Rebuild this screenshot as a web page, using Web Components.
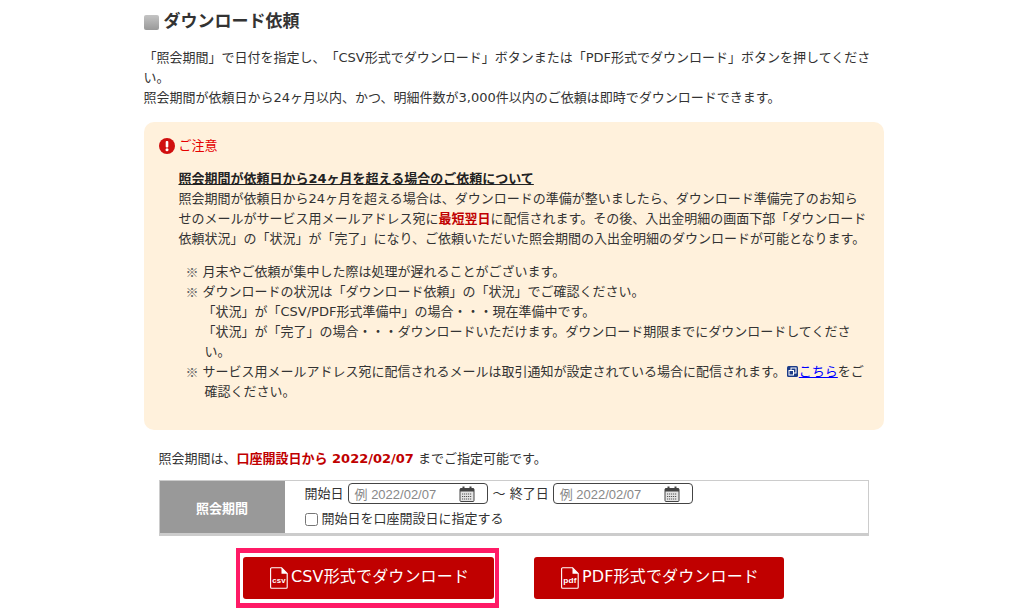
<!DOCTYPE html>
<html lang="ja">
<head>
<meta charset="utf-8">
<title>ダウンロード依頼</title>
<style>
  html, body { margin: 0; padding: 0; background: #fff; }
  body {
    font-family: "DejaVu Sans", "Noto Sans CJK JP", sans-serif;
    font-size: 13px;
    color: #333;
    overflow: hidden;
    text-spacing-trim: space-all;
  }
</style>
</head>
<body>
<dl-page>
  <dl-heading>ダウンロード依頼</dl-heading>
  <p slot="lead">「照会期間」で日付を指定し、「CSV形式でダウンロード」ボタンまたは「PDF形式でダウンロード」ボタンを押してください。<br>照会期間が依頼日から24ヶ月以内、かつ、明細件数が3,000件以内のご依頼は即時でダウンロードできます。</p>
  <dl-notice slot="notice"></dl-notice>
  <dl-period-form slot="form"></dl-period-form>
  <dl-button slot="actions" kind="csv" focused>CSV形式でダウンロード</dl-button>
  <dl-button slot="actions" kind="pdf">PDF形式でダウンロード</dl-button>
</dl-page>

<script>
class DlPage extends HTMLElement {
  constructor() {
    super();
    this.attachShadow({ mode: 'open' });
    this.shadowRoot.innerHTML = `
      <style>
        :host { display: block; width: 740px; margin: 0 auto; padding: 11px 0 14px; }
        ::slotted(p) { margin: 15px 0 0; line-height: 20px; height: 60px; }
        .notice { margin-top: 14px; }
        .form { margin-top: 19px; padding: 0 15px; }
        .actions { display: flex; justify-content: center; gap: 40px; margin-top: 21px; }
      </style>
      <slot></slot>
      <slot name="lead"></slot>
      <div class="notice"><slot name="notice"></slot></div>
      <div class="form"><slot name="form"></slot></div>
      <div class="actions"><slot name="actions"></slot></div>
    `;
  }
}

class DlHeading extends HTMLElement {
  constructor() {
    super();
    this.attachShadow({ mode: 'open' });
    this.shadowRoot.innerHTML = `
      <style>
        :host { display: flex; align-items: center; gap: 5px; height: 22px; font-size: 17px; font-weight: bold; color: #333; }
        .mark { width: 15px; height: 15px; border-radius: 2px; background: linear-gradient(#c4c4c4, #999); }
        .label { line-height: 22px; margin-top: -2px; }
      </style>
      <span class="mark"></span><span class="label"><slot></slot></span>
    `;
  }
}

class DlNotice extends HTMLElement {
  constructor() {
    super();
    this.attachShadow({ mode: 'open' });
    this.shadowRoot.innerHTML = `
      <style>
        :host { display: block; height: 308px; box-sizing: border-box; padding: 14px 16px 0 16px; background: #fff1dc; border-radius: 10px; line-height: 20px; color: #333; }
        .title { display: flex; align-items: center; gap: 4px; margin-left: -1px; color: #e60000; }
        .title svg { width: 16px; height: 16px; flex: none; }
        .body { margin: 13px 0 0 19px; }
        h3 { margin: 0; font-size: 13px; font-weight: bold; text-decoration: underline; color: #222; line-height: 20px; }
        p { margin: 0; }
        strong { color: #c00000; }
        ul { list-style: none; margin: 13px 0 0; padding: 0; }
        li { position: relative; padding-left: 26px; text-indent: -2px; }
        li::before { content: "※"; position: absolute; left: 9px; font-family: "Noto Sans CJK JP", sans-serif; color: #666; }
        .sub { display: block; }
        a { color: #00f; }
        .ext { display: inline-block; vertical-align: -1px; margin-left: 1px; margin-right: 1px; }
      </style>
      <div class="title">
        <svg viewBox="0 0 16 16"><circle cx="8" cy="8" r="8" fill="#d00f0f"/><rect x="6.7" y="3" width="2.6" height="6.6" rx="1" fill="#fff"/><circle cx="8" cy="11.8" r="1.5" fill="#fff"/></svg>
        <span>ご注意</span>
      </div>
      <div class="body">
        <h3>照会期間が依頼日から24ヶ月を超える場合のご依頼について</h3>
        <p>照会期間が依頼日から24ヶ月を超える場合は、ダウンロードの準備が整いましたら、ダウンロード準備完了のお知らせのメールがサービス用メールアドレス宛に<strong>最短翌日</strong>に配信されます。その後、入出金明細の画面下部「ダウンロード依頼状況」の「状況」が「完了」になり、ご依頼いただいた照会期間の入出金明細のダウンロードが可能となります。</p>
        <ul>
          <li>月末やご依頼が集中した際は処理が遅れることがございます。</li>
          <li>ダウンロードの状況は「ダウンロード依頼」の「状況」でご確認ください。
            <span class="sub">「状況」が「CSV/PDF形式準備中」の場合・・・現在準備中です。</span>
            <span class="sub">「状況」が「完了」の場合・・・ダウンロードいただけます。ダウンロード期限までにダウンロードしてください。</span></li>
          <li>サービス用メールアドレス宛に配信されるメールは取引通知が設定されている場合に配信されます。<svg class="ext" width="11" height="11" viewBox="0 0 11 11"><rect width="11" height="11" rx="1.5" fill="#1c3b87"/><rect x="4" y="2" width="5" height="5" fill="none" stroke="#fff" stroke-width="1"/><rect x="2" y="4.5" width="4.5" height="4.5" fill="#1c3b87" stroke="#fff" stroke-width="1"/></svg><a href="#">こちら</a>をご確認ください。</li>
        </ul>
      </div>
    `;
  }
}

class DlDateField extends HTMLElement {
  constructor() {
    super();
    this.attachShadow({ mode: 'open' });
    this.shadowRoot.innerHTML = `
      <style>
        :host { display: inline-flex; align-items: center; justify-content: space-between; box-sizing: border-box; width: 140px; height: 21px; padding: 0 12px 0 6px; border: 1px solid #444; border-radius: 4px; background: #fff; color: #888; font-family: "Liberation Sans", "Noto Sans CJK JP", sans-serif; font-size: 13px; }
        svg { width: 16px; height: 16px; }
      </style>
      <span>例 2022/02/07</span>
      <svg viewBox="0 0 16 16">
        <rect x="1" y="2.5" width="14" height="13" rx="1" fill="#e4e4e4" stroke="#444"/>
        <rect x="1" y="2.5" width="14" height="3" fill="#444"/>
        <rect x="3.5" y="0.5" width="2" height="3.5" fill="#444"/><rect x="10.5" y="0.5" width="2" height="3.5" fill="#444"/>
        <path d="M3 8h10M3 10.5h10M3 13h10" stroke="#555" stroke-dasharray="1.2 0.8"/>
      </svg>
    `;
  }
}

class DlPeriodForm extends HTMLElement {
  constructor() {
    super();
    this.attachShadow({ mode: 'open' });
    this.shadowRoot.innerHTML = `
      <style>
        :host { display: block; }
        .note { margin: 0 0 11px; line-height: 20px; height: 20px; }
        .note b { color: #c00000; }
        .table { display: grid; grid-template-columns: 125px 1fr; height: 56px; box-sizing: border-box; border: 1px solid #ccc; border-bottom-width: 3px; }
        .head { display: flex; align-items: center; justify-content: center; background: #999; color: #fff; font-weight: bold; }
        .cell { display: flex; flex-direction: column; gap: 5px; padding: 2px 0 0 20px; }
        .row { display: flex; align-items: center; height: 21px; gap: 4px; }
        .row span { line-height: 20px; }
        .row .to { margin-left: 1px; }
        .check { display: flex; align-items: center; gap: 4px; line-height: 20px; }
        input { width: 13px; height: 13px; margin: 0; }
      </style>
      <p class="note">照会期間は、<b>口座開設日から 2022/02/07</b> までご指定可能です。</p>
      <div class="table">
        <div class="head">照会期間</div>
        <div class="cell">
          <div class="row"><span>開始日</span><dl-date-field></dl-date-field><span class="to">～ 終了日</span><dl-date-field></dl-date-field></div>
          <label class="check"><input type="checkbox">開始日を口座開設日に指定する</label>
        </div>
      </div>
    `;
  }
}

class DlButton extends HTMLElement {
  constructor() {
    super();
    this.attachShadow({ mode: 'open' });
    const label = this.getAttribute('kind') === 'pdf' ? 'pdf' : 'csv';
    this.shadowRoot.innerHTML = `
      <style>
        :host { display: block; position: relative; width: 251px; }
        :host([kind="pdf"]) { width: 250px; }
        /* focus ring is square and not even on all sides */
        :host([focused])::after { content: ""; position: absolute; inset: -9px -5px -9px -7px; border: 5px solid #ff1a66; border-width: 5px 4px; pointer-events: none; }
        button { display: flex; align-items: center; justify-content: center; gap: 3px; width: 100%; height: 42px; padding: 0 0 6px 2px; border: 0; border-radius: 3px; background: #c00000; color: #fff; font: inherit; font-size: 16px; letter-spacing: .15px; }
        svg { width: 18px; height: 22px; margin-top: 5px; flex: none; }
        text { font-family: "Liberation Sans", sans-serif; font-size: 7px; font-weight: bold; fill: #fff; }
      </style>
      <button>
        <svg viewBox="0 0 18 22">
          <path d="M1.6 0.8h10l5.6 5.6v13.8a1 1 0 0 1-1 1H1.6a1 1 0 0 1-1-1V1.8a1 1 0 0 1 1-1z" fill="none" stroke="#fff" stroke-width="1.1"/>
          <path d="M11.5 0.8l6 6h-6z" fill="#fff"/>
          <text x="2.2" y="15.5" textLength="13.5" lengthAdjust="spacingAndGlyphs">${label}</text>
        </svg>
        <slot></slot>
      </button>
    `;
  }
}

customElements.define('dl-page', DlPage);
customElements.define('dl-heading', DlHeading);
customElements.define('dl-notice', DlNotice);
customElements.define('dl-date-field', DlDateField);
customElements.define('dl-period-form', DlPeriodForm);
customElements.define('dl-button', DlButton);
</script>
</body>
</html>
